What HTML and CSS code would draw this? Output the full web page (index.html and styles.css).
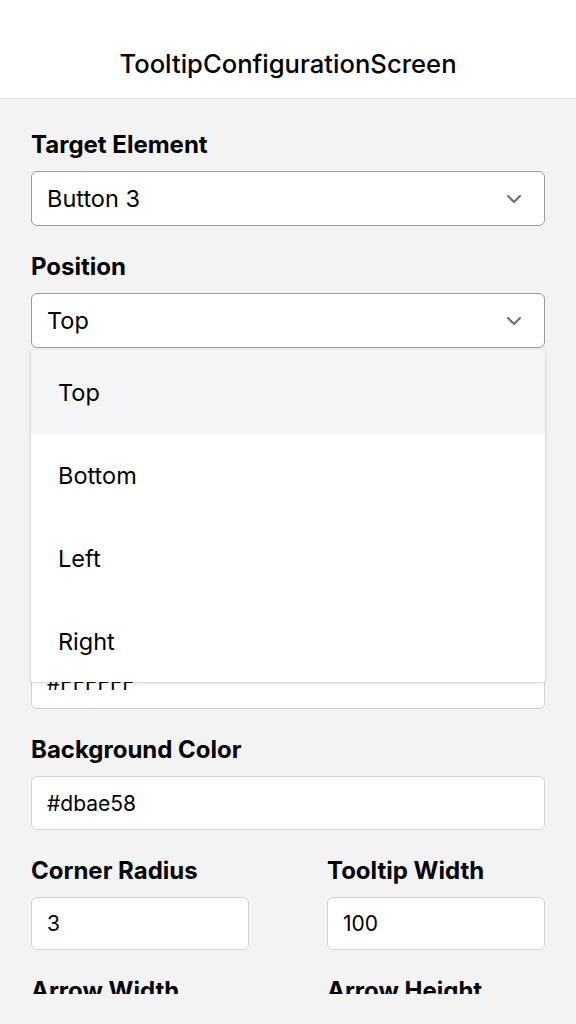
FILE: index.html
```html
<!DOCTYPE html>
<html lang="en">
<head>
<meta charset="utf-8">
<title>TooltipConfigurationScreen</title>
<link rel="stylesheet" href="styles.css">
</head>
<body>
<div class="screen">
  <header class="header">
    <h1 class="title">TooltipConfigurationScreen</h1>
  </header>
  <main class="scroll">
    <div class="content">
      <div class="field">
        <label class="label">Target Element</label>
        <div class="select">
          <span class="select-value">Button 3</span>
          <svg class="chevron" width="16" height="10" viewBox="0 0 16 10"><path d="M2 2 L8 8 L14 2" fill="none" stroke="#6b6b6b" stroke-width="2" stroke-linecap="round" stroke-linejoin="round"/></svg>
        </div>
      </div>
      <div class="field anchor">
        <label class="label">Position</label>
        <div class="select">
          <span class="select-value">Top</span>
          <svg class="chevron" width="16" height="10" viewBox="0 0 16 10"><path d="M2 2 L8 8 L14 2" fill="none" stroke="#6b6b6b" stroke-width="2" stroke-linecap="round" stroke-linejoin="round"/></svg>
        </div>
        <ul class="menu">
          <li class="menu-item active">Top</li>
          <li class="menu-item">Bottom</li>
          <li class="menu-item">Left</li>
          <li class="menu-item last">Right</li>
        </ul>
      </div>
      <div class="field">
        <label class="label">Tooltip Text</label>
        <div class="input hidden-input">This is a tooltip</div>
      </div>
      <div class="field">
        <label class="label">Font Size</label>
        <div class="input hidden-input">14</div>
      </div>
      <div class="field">
        <label class="label">Text Color</label>
        <div class="input">#FFFFFF</div>
      </div>
      <div class="field">
        <label class="label">Background Color</label>
        <div class="input">#dbae58</div>
      </div>
      <div class="row">
        <div class="field">
          <label class="label">Corner Radius</label>
          <div class="input">3</div>
        </div>
        <div class="field">
          <label class="label">Tooltip Width</label>
          <div class="input">100</div>
        </div>
      </div>
      <div class="row">
        <div class="field">
          <label class="label">Arrow Width</label>
          <div class="input">10</div>
        </div>
        <div class="field">
          <label class="label">Arrow Height</label>
          <div class="input">6</div>
        </div>
      </div>
    </div>
  </main>
  <div class="bottom"></div>
</div>
</body>
</html>
```

FILE: styles.css
```css
* { box-sizing: border-box; }
html, body {
  margin: 0;
  padding: 0;
  background: #f3f3f3;
  font-family: Inter, "Noto Sans", sans-serif;
  color: #000;
}
.screen {
  width: 576px;
  height: 1024px;
  display: flex;
  flex-direction: column;
  overflow: hidden;
}
.header {
  height: 99px;
  flex: none;
  background: #fff;
  border-bottom: 1px solid #e3e3e3;
  display: flex;
  align-items: flex-end;
  justify-content: center;
  padding-bottom: 19px;
}
.title {
  margin: 0;
  font-size: 25.6px;
  font-weight: 500;
  line-height: 30px;
  letter-spacing: 0;
}
.scroll {
  flex: 1;
  overflow: hidden;
}
.bottom {
  height: 30px;
  flex: none;
  background: #f3f3f3;
}
.content {
  padding: 32px 31px 0 31px;
  display: flex;
  flex-direction: column;
  gap: 27px;
}
.field {
  display: flex;
  flex-direction: column;
}
.anchor { position: relative; }
.label {
  font-size: 24px;
  font-weight: 700;
  line-height: 27px;
  margin-bottom: 13px;
  letter-spacing: 0;
}
.select {
  height: 55px;
  background: #fff;
  border: 1px solid #9a9a9a;
  border-radius: 6px;
  display: flex;
  align-items: center;
  justify-content: space-between;
  padding: 0 22px 0 15px;
}
.select-value {
  font-size: 23.5px;
  line-height: 27px;
}
.chevron { display: block; }
.input {
  height: 54px;
  background: #fff;
  border: 1px solid #d2d2d2;
  border-radius: 6px;
  display: flex;
  align-items: center;
  padding: 0 15px;
  font-size: 21px;
}
.hidden-input { height: 53px; }
.row {
  display: grid;
  grid-template-columns: 218px 218px;
  justify-content: space-between;
}
.row .input { height: 53px; }
.menu {
  position: absolute;
  top: 97px;
  left: 0;
  right: 0;
  margin: 0;
  padding: 0;
  list-style: none;
  background: #fff;
  box-shadow: 0 1px 3px rgba(0,0,0,0.18), 0 0 1px rgba(0,0,0,0.12);
  z-index: 5;
}
.menu-item {
  height: 83px;
  display: flex;
  align-items: center;
  padding-left: 27px;
  font-size: 23.5px;
}
.menu-item.active { background: #f4f5f7; height: 84px; }
.menu-item.last { height: 82px; }
```
